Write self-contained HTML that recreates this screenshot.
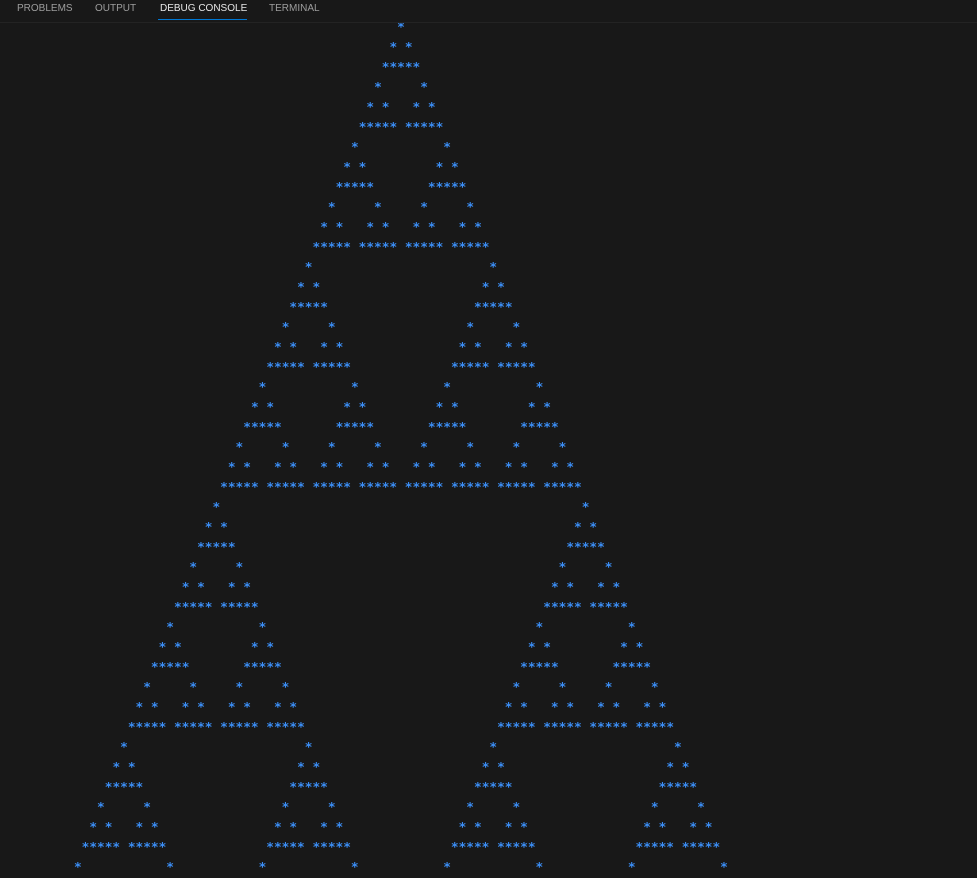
<!DOCTYPE html>
<html><head><meta charset="utf-8"><style>
html,body{margin:0;padding:0;background:#181818;width:977px;height:876px;overflow:hidden}
.tabs{position:absolute;left:0;top:0;height:22px;width:977px;font-family:"Liberation Sans",sans-serif;font-size:10px;color:#9d9d9d;border-bottom:1px solid #232323;z-index:2;background:#181818}
.tabs span{position:absolute;top:3px;letter-spacing:0}
.tabs .act{color:#e7e7e7}
.ul{position:absolute;left:158px;top:19px;width:89px;height:1px;background:#0078d4}
.out{position:absolute;left:35.5px;top:18px;font-family:"DejaVu Sans Mono","Liberation Mono",monospace;font-size:12.79px;font-weight:bold;line-height:20px;color:#3b8ef5;white-space:normal}
.out div{height:20px;white-space:nowrap}
i{font-style:normal;display:inline-block;width:6ch;white-space:pre;vertical-align:top;height:20px}
</style></head><body>
<div class="tabs"><span style="left:17px">PROBLEMS</span><span style="left:95px">OUTPUT</span><span class="act" style="left:160px">DEBUG CONSOLE</span><span style="left:269px">TERMINAL</span><div class="ul"></div></div>
<div class="out"><div style="padding-left:45ch"><i>  *  </i></div><div style="padding-left:45ch"><i> * * </i></div><div style="padding-left:45ch"><i>*****</i></div><div style="padding-left:42ch"><i>  *  </i><i>  *  </i></div><div style="padding-left:42ch"><i> * * </i><i> * * </i></div><div style="padding-left:42ch"><i>*****</i><i>*****</i></div><div style="padding-left:39ch"><i>  *  </i><i></i><i>  *  </i></div><div style="padding-left:39ch"><i> * * </i><i></i><i> * * </i></div><div style="padding-left:39ch"><i>*****</i><i></i><i>*****</i></div><div style="padding-left:36ch"><i>  *  </i><i>  *  </i><i>  *  </i><i>  *  </i></div><div style="padding-left:36ch"><i> * * </i><i> * * </i><i> * * </i><i> * * </i></div><div style="padding-left:36ch"><i>*****</i><i>*****</i><i>*****</i><i>*****</i></div><div style="padding-left:33ch"><i>  *  </i><i></i><i></i><i></i><i>  *  </i></div><div style="padding-left:33ch"><i> * * </i><i></i><i></i><i></i><i> * * </i></div><div style="padding-left:33ch"><i>*****</i><i></i><i></i><i></i><i>*****</i></div><div style="padding-left:30ch"><i>  *  </i><i>  *  </i><i></i><i></i><i>  *  </i><i>  *  </i></div><div style="padding-left:30ch"><i> * * </i><i> * * </i><i></i><i></i><i> * * </i><i> * * </i></div><div style="padding-left:30ch"><i>*****</i><i>*****</i><i></i><i></i><i>*****</i><i>*****</i></div><div style="padding-left:27ch"><i>  *  </i><i></i><i>  *  </i><i></i><i>  *  </i><i></i><i>  *  </i></div><div style="padding-left:27ch"><i> * * </i><i></i><i> * * </i><i></i><i> * * </i><i></i><i> * * </i></div><div style="padding-left:27ch"><i>*****</i><i></i><i>*****</i><i></i><i>*****</i><i></i><i>*****</i></div><div style="padding-left:24ch"><i>  *  </i><i>  *  </i><i>  *  </i><i>  *  </i><i>  *  </i><i>  *  </i><i>  *  </i><i>  *  </i></div><div style="padding-left:24ch"><i> * * </i><i> * * </i><i> * * </i><i> * * </i><i> * * </i><i> * * </i><i> * * </i><i> * * </i></div><div style="padding-left:24ch"><i>*****</i><i>*****</i><i>*****</i><i>*****</i><i>*****</i><i>*****</i><i>*****</i><i>*****</i></div><div style="padding-left:21ch"><i>  *  </i><i></i><i></i><i></i><i></i><i></i><i></i><i></i><i>  *  </i></div><div style="padding-left:21ch"><i> * * </i><i></i><i></i><i></i><i></i><i></i><i></i><i></i><i> * * </i></div><div style="padding-left:21ch"><i>*****</i><i></i><i></i><i></i><i></i><i></i><i></i><i></i><i>*****</i></div><div style="padding-left:18ch"><i>  *  </i><i>  *  </i><i></i><i></i><i></i><i></i><i></i><i></i><i>  *  </i><i>  *  </i></div><div style="padding-left:18ch"><i> * * </i><i> * * </i><i></i><i></i><i></i><i></i><i></i><i></i><i> * * </i><i> * * </i></div><div style="padding-left:18ch"><i>*****</i><i>*****</i><i></i><i></i><i></i><i></i><i></i><i></i><i>*****</i><i>*****</i></div><div style="padding-left:15ch"><i>  *  </i><i></i><i>  *  </i><i></i><i></i><i></i><i></i><i></i><i>  *  </i><i></i><i>  *  </i></div><div style="padding-left:15ch"><i> * * </i><i></i><i> * * </i><i></i><i></i><i></i><i></i><i></i><i> * * </i><i></i><i> * * </i></div><div style="padding-left:15ch"><i>*****</i><i></i><i>*****</i><i></i><i></i><i></i><i></i><i></i><i>*****</i><i></i><i>*****</i></div><div style="padding-left:12ch"><i>  *  </i><i>  *  </i><i>  *  </i><i>  *  </i><i></i><i></i><i></i><i></i><i>  *  </i><i>  *  </i><i>  *  </i><i>  *  </i></div><div style="padding-left:12ch"><i> * * </i><i> * * </i><i> * * </i><i> * * </i><i></i><i></i><i></i><i></i><i> * * </i><i> * * </i><i> * * </i><i> * * </i></div><div style="padding-left:12ch"><i>*****</i><i>*****</i><i>*****</i><i>*****</i><i></i><i></i><i></i><i></i><i>*****</i><i>*****</i><i>*****</i><i>*****</i></div><div style="padding-left:9ch"><i>  *  </i><i></i><i></i><i></i><i>  *  </i><i></i><i></i><i></i><i>  *  </i><i></i><i></i><i></i><i>  *  </i></div><div style="padding-left:9ch"><i> * * </i><i></i><i></i><i></i><i> * * </i><i></i><i></i><i></i><i> * * </i><i></i><i></i><i></i><i> * * </i></div><div style="padding-left:9ch"><i>*****</i><i></i><i></i><i></i><i>*****</i><i></i><i></i><i></i><i>*****</i><i></i><i></i><i></i><i>*****</i></div><div style="padding-left:6ch"><i>  *  </i><i>  *  </i><i></i><i></i><i>  *  </i><i>  *  </i><i></i><i></i><i>  *  </i><i>  *  </i><i></i><i></i><i>  *  </i><i>  *  </i></div><div style="padding-left:6ch"><i> * * </i><i> * * </i><i></i><i></i><i> * * </i><i> * * </i><i></i><i></i><i> * * </i><i> * * </i><i></i><i></i><i> * * </i><i> * * </i></div><div style="padding-left:6ch"><i>*****</i><i>*****</i><i></i><i></i><i>*****</i><i>*****</i><i></i><i></i><i>*****</i><i>*****</i><i></i><i></i><i>*****</i><i>*****</i></div><div style="padding-left:3ch"><i>  *  </i><i></i><i>  *  </i><i></i><i>  *  </i><i></i><i>  *  </i><i></i><i>  *  </i><i></i><i>  *  </i><i></i><i>  *  </i><i></i><i>  *  </i></div></div>
</body></html>
